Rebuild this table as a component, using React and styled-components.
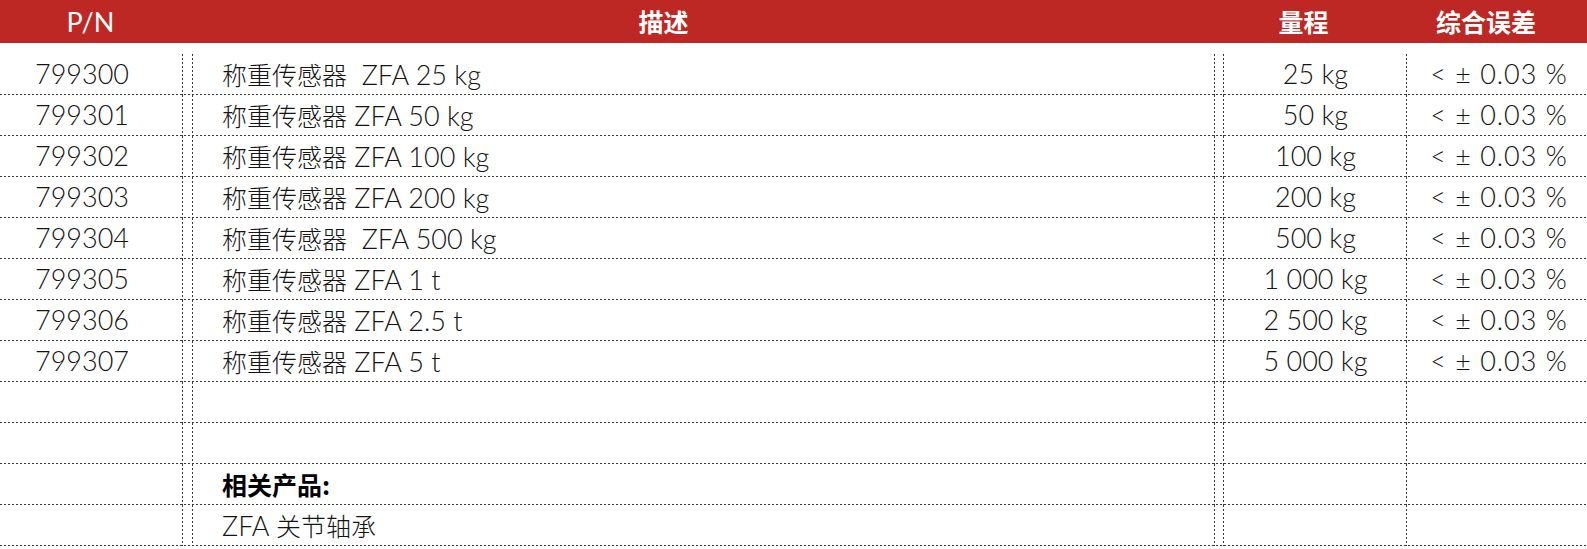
import React from 'react';
import styled, { createGlobalStyle } from 'styled-components';

const GlobalStyle = createGlobalStyle`
  html, body {
    margin: 0;
    padding: 0;
    background: #ffffff;
  }
  body {
    font-family: "Lato", "Noto Sans CJK SC", sans-serif;
    color: #141414;
  }
`;

const RED = '#be2824';
const DOT = '#3a3a3a';
const COLUMNS = '183px 10px 1022px 9px 183px 1fr';

const Page = styled.div`
  width: 1587px;
  display: flex;
  flex-direction: column;
`;

const HeaderBar = styled.div`
  height: 43px;
  background: ${RED};
  display: grid;
  grid-template-columns: 193px 1031px 183px 1fr;
  align-items: center;
`;

const HeaderCell = styled.div`
  text-align: center;
  padding-right: ${p => p.$shift || 0}px;
  color: #ffffff;
  font-family: ${p => (p.$latin ? '"Lato", sans-serif' : '"Noto Sans CJK SC", sans-serif')};
  font-size: ${p => (p.$latin ? '27px' : '25px')};
  font-weight: ${p => (p.$latin ? 400 : 700)};
  line-height: 43px;
`;

const Body = styled.div`
  margin-top: 11px;
  display: flex;
  flex-direction: column;
`;

const Row = styled.div`
  height: 41px;
  display: grid;
  grid-template-columns: ${COLUMNS};
  background-image: linear-gradient(to right, ${DOT} 2px, transparent 2px);
  background-size: 4px 1px;
  background-repeat: repeat-x;
  background-position: left bottom;
`;

const Cell = styled.div`
  height: 41px;
  line-height: 40px;
  font-size: 27px;
  font-weight: 300;
  white-space: pre;
  overflow: hidden;
  text-align: ${p => p.$align || 'left'};
  padding-left: ${p => p.$pad || 0}px;
  letter-spacing: ${p => p.$spread || 0}px;
  background-image: ${p =>
    p.$line ? `linear-gradient(to bottom, ${DOT} 2px, transparent 2px)` : 'none'};
  background-size: 1px 4px;
  background-repeat: repeat-y;
  background-position: right top;
`;

const Cjk = styled.span`
  font-family: "Noto Sans CJK SC", sans-serif;
  font-size: 25px;
  font-weight: ${p => (p.$bold ? 700 : 300)};
  color: ${p => (p.$bold ? '#000' : 'inherit')};
`;

const products = [
  { pn: '799300', desc: '  ZFA 25 kg', range: '25 kg' },
  { pn: '799301', desc: ' ZFA 50 kg', range: '50 kg' },
  { pn: '799302', desc: ' ZFA 100 kg', range: '100 kg' },
  { pn: '799303', desc: ' ZFA 200 kg', range: '200 kg' },
  { pn: '799304', desc: '  ZFA 500 kg', range: '500 kg' },
  { pn: '799305', desc: ' ZFA 1 t', range: '1 000 kg' },
  { pn: '799306', desc: ' ZFA 2.5 t', range: '2 500 kg' },
  { pn: '799307', desc: ' ZFA 5 t', range: '5 000 kg' },
];

const TableRow = ({ pn = '', desc = null, range = '', error = '' }) => (
  <Row>
    <Cell $line $pad={35}>{pn}</Cell>
    <Cell $line />
    <Cell $line $pad={29}>{desc}</Cell>
    <Cell $line />
    <Cell $line $align="center">{range}</Cell>
    <Cell $align="center" $pad={4} $spread={1}>{error}</Cell>
  </Row>
);

export default function App() {
  return (
    <Page>
      <GlobalStyle />
      <HeaderBar>
        <HeaderCell $latin $shift={12}>P/N</HeaderCell>
        <HeaderCell $shift={90}>描述</HeaderCell>
        <HeaderCell $shift={24}>量程</HeaderCell>
        <HeaderCell $shift={22}>综合误差</HeaderCell>
      </HeaderBar>
      <Body>
        {products.map(p => (
          <TableRow
            key={p.pn}
            pn={p.pn}
            desc={<><Cjk>称重传感器</Cjk>{p.desc}</>}
            range={p.range}
            error="< ± 0.03 %"
          />
        ))}
        <TableRow />
        <TableRow />
        <TableRow desc={<Cjk $bold>相关产品:</Cjk>} />
        <TableRow desc={<>ZFA <Cjk>关节轴承</Cjk></>} />
      </Body>
    </Page>
  );
}
